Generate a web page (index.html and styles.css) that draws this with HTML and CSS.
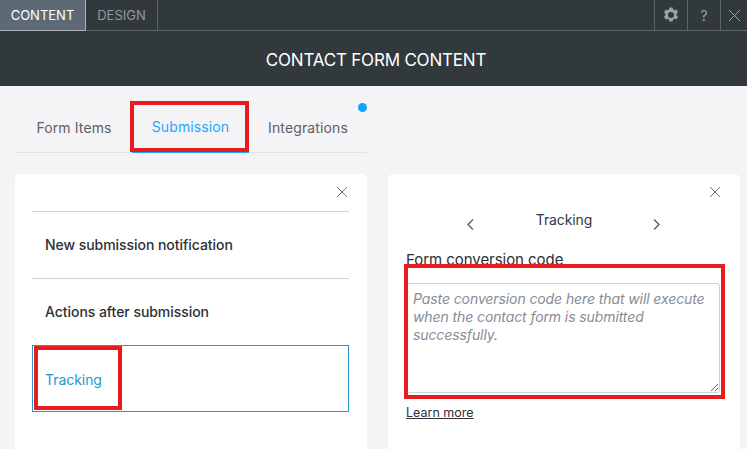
FILE: index.html
```html
<!doctype html>
<html>
  <head>
    <title>Contact form content</title>
    <meta charset="utf-8" />
    <link rel="stylesheet" href="styles.css">
  </head>
  <body>
    <div class="topbar">
      <a class="toptab active">CONTENT</a>
      <a class="toptab">DESIGN</a>
      <div class="spacer"></div>
      <a class="topbtn">
        <svg width="16" height="16" viewBox="0 0 16 16"><path fill="#9aa3a8" fill-rule="evenodd" d="M6.4 0.5h3.2l.5 2 1.3.7 2-.6 1.6 2.8-1.5 1.4v1.4l1.5 1.4-1.6 2.8-2-.6-1.3.7-.5 2H6.4l-.5-2-1.3-.7-2 .6L1 9.6l1.5-1.4V6.8L1 5.4l1.6-2.8 2 .6 1.3-.7zM8 5a3 3 0 1 0 0 6 3 3 0 0 0 0-6z"/></svg>
      </a>
      <a class="topbtn help">?</a>
      <a class="topbtn">
        <svg width="13" height="13" viewBox="0 0 13 13"><path stroke="#9aa3a8" stroke-width="1" fill="none" d="M1 1l11 11M12 1L1 12"/></svg>
      </a>
    </div>
    <div class="header">CONTACT FORM CONTENT</div>

    <div class="main">
      <div class="tabs">
        <a class="tab">Form Items</a>
        <a class="tab selected">Submission</a>
        <a class="tab">Integrations</a>
        <span class="dot"></span>
      </div>
      <div class="cards">
        <div class="card">
          <div class="card-top">
            <svg class="close" width="10" height="10" viewBox="0 0 10 10"><path stroke="#6f7a80" fill="none" d="M0 0l10 10M10 0L0 10"/></svg>
          </div>
          <div class="menu">
            <div class="menu-row">New submission notification</div>
            <div class="menu-row">Actions after submission</div>
            <div class="menu-row current">Tracking</div>
          </div>
        </div>
        <div class="card">
          <div class="card-top">
            <svg class="close" width="10" height="10" viewBox="0 0 10 10"><path stroke="#6f7a80" fill="none" d="M0 0l10 10M10 0L0 10"/></svg>
          </div>
          <div class="pager">
            <svg width="7" height="11" viewBox="0 0 7 11"><path stroke="#56636b" stroke-width="1.4" fill="none" d="M6 .5l-5 5 5 5"/></svg>
            <span class="pager-title">Tracking</span>
            <svg width="7" height="11" viewBox="0 0 7 11"><path stroke="#56636b" stroke-width="1.4" fill="none" d="M1 .5l5 5-5 5"/></svg>
          </div>
          <div class="field">
            <label class="field-label">Form conversion code</label>
            <textarea class="code" placeholder="Paste conversion code here that will execute when the contact form is submitted successfully."></textarea>
            <a class="learn">Learn more</a>
          </div>
        </div>
      </div>
    </div>

    <div class="mark mark-tab"></div>
    <div class="mark mark-row"></div>
    <div class="mark mark-code"></div>
  </body>
</html>
```

FILE: styles.css
```css
* {
  margin: 0;
  padding: 0;
  box-sizing: border-box;
}
html,
body {
  height: 449px;
  overflow: hidden;
}
body {
  position: relative;
  background-color: #f4f4f7;
  font-family: Inter, "Noto Sans", sans-serif;
  color: #2b3135;
}

.topbar {
  display: flex;
  height: 31px;
  background-color: #32393c;
  border-bottom: 1px solid #5a6567;
}
.toptab {
  display: flex;
  align-items: center;
  justify-content: center;
  width: 72px;
  font-size: 13px;
  color: #8f989c;
  border-right: 1px solid #5a6567;
}
.toptab.active {
  width: 86px;
  color: #fff;
  background-color: #5d6a76;
  border-right: 1px solid #a9b1b6;
  border-bottom: 1px solid #a9b1b6;
  margin-bottom: -1px;
}
.spacer {
  flex: 1;
}
.topbtn {
  display: flex;
  align-items: center;
  justify-content: center;
  width: 33px;
  border-left: 1px solid #5a6567;
  color: #9aa3a8;
  font-size: 14px;
}
.topbtn:last-child {
  width: 27px;
}
.header {
  height: 55px;
  padding-left: 5px;
  line-height: 58px;
  text-align: center;
  background-color: #32393c;
  color: #fff;
  font-size: 17px;
  letter-spacing: -0.2px;
}

.main {
  padding: 0 7px 0 15px;
}
.tabs {
  position: relative;
  display: flex;
  width: 352px;
  height: 67px;
  border-bottom: 1px solid #e1e2e6;
}
.tab {
  display: flex;
  align-items: center;
  justify-content: center;
  height: 67px;
  padding-top: 16px;
  font-size: 14px;
  letter-spacing: 0.12px;
  color: #5d5f66;
}
.tab:nth-child(1) {
  width: 117px;
  padding-left: 1px;
}
.tab:nth-child(2) {
  width: 117px;
}
.tab:nth-child(3) {
  width: 118px;
}
.tab.selected {
  color: #1ea7fb;
  border-bottom: 2px solid #1ea7fb;
}
.dot {
  position: absolute;
  top: 17px;
  right: 0;
  width: 9px;
  height: 9px;
  border-radius: 50%;
  background-color: #0ea5fb;
}

.cards {
  display: flex;
  gap: 21px;
  margin-top: 21px;
}
.card {
  width: 352px;
  height: 275px;
  background-color: #fff;
  border-radius: 5px 5px 0 0;
}
.card-top {
  display: flex;
  justify-content: flex-end;
  padding: 13px 20px 0 0;
  height: 37px;
}
.menu {
  margin: 0 18px 0 17px;
  border-top: 1px solid #cfd3d5;
}
.menu-row {
  display: flex;
  align-items: center;
  height: 67px;
  padding: 0 0 2px 13px;
  font-size: 14px;
  font-weight: 500;
  letter-spacing: -0.05px;
  color: #2b3135;
  border-bottom: 1px solid #cfd3d5;
}
.menu-row.current {
  color: #2497d0;
  font-weight: 400;
  height: 67px;
  margin-top: -1px;
  border: 1px solid #2497d0;
  padding: 1px 0 0 12px;
}
.menu-row:nth-child(2) {
  border-bottom: 0;
}

.pager {
  display: flex;
  align-items: flex-start;
  padding-left: 79px;
}
.pager svg {
  margin-top: 8px;
}
.pager-title {
  width: 179px;
  padding-left: 1px;
  text-align: center;
  font-size: 14px;
  letter-spacing: -0.1px;
  line-height: 17px;
  color: #2f3a45;
}
.field {
  padding: 0 20px 0 18px;
}
.field-label {
  display: block;
  margin-top: 21px;
  font-size: 15px;
  letter-spacing: -0.05px;
  line-height: 18px;
  color: #2b3135;
}
.code {
  display: block;
  width: 314px;
  height: 110px;
  margin-top: 14px;
  padding: 6px 6px;
  border: 1px solid #cfd3d5;
  border-radius: 3px;
  background-color: #fff;
  font-family: Inter, "Noto Sans", sans-serif;
  font-size: 14px;
  font-style: italic;
  letter-spacing: -0.1px;
  line-height: 18px;
  outline: none;
}
.code::placeholder {
  color: #878c96;
  opacity: 1;
}
.learn {
  display: inline-block;
  margin-top: 11px;
  font-size: 12.5px;
  line-height: 17px;
  color: #2b3135;
  text-decoration: underline;
}

/* red annotations drawn over the screenshot */
.mark {
  position: absolute;
  border: 4px solid #e81c1c;
}
.mark-tab {
  left: 130px;
  top: 101px;
  width: 119px;
  height: 51px;
}
.mark-row {
  left: 34px;
  top: 346px;
  width: 88px;
  height: 64px;
}
.mark-code {
  left: 404px;
  top: 264px;
  width: 321px;
  height: 135px;
}
```
